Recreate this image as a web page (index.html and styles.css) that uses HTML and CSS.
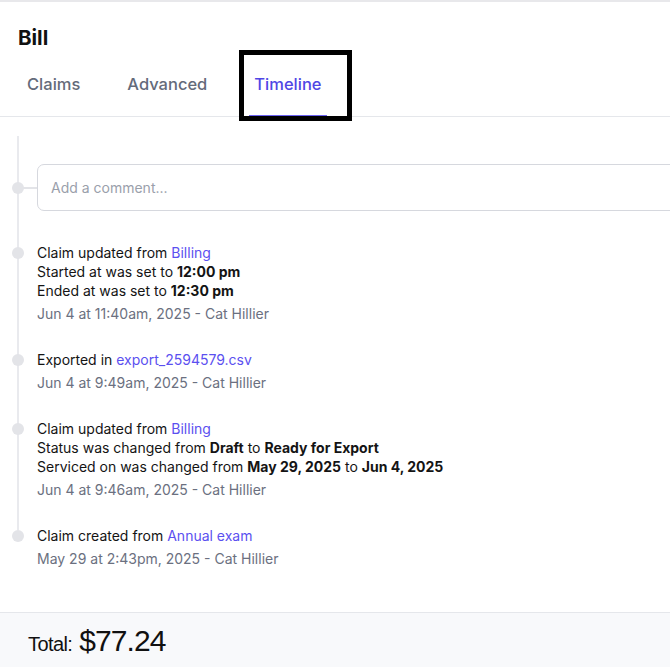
FILE: index.html
```html
<!DOCTYPE html>
<html lang="en">
<head>
  <meta charset="UTF-8">
  <title>Bill</title>
  <link rel="stylesheet" href="styles.css">
</head>
<body>

  <div class="page">
    <h1 class="title">Bill</h1>

    <nav class="tabs">
      <a class="tab">Claims</a>
      <a class="tab">Advanced</a>
      <a class="tab active">Timeline</a>
    </nav>
    <!-- highlight box drawn over the active tab -->
    <div class="highlight"></div>

    <div class="timeline">
      <div class="event comment-row">
        <span class="dot"></span>
        <span class="connector"></span>
        <input class="comment" type="text" placeholder="Add a comment...">
      </div>

      <div class="event">
        <span class="dot"></span>
        <div class="body">
          <p>Claim updated from <a href="#">Billing</a></p>
          <p>Started at was set to <b>12:00 pm</b></p>
          <p>Ended at was set to <b>12:30 pm</b></p>
          <p class="meta">Jun 4 at 11:40am, 2025 - Cat Hillier</p>
        </div>
      </div>

      <div class="event">
        <span class="dot"></span>
        <div class="body">
          <p>Exported in <a href="#">export_2594579.csv</a></p>
          <p class="meta">Jun 4 at 9:49am, 2025 - Cat Hillier</p>
        </div>
      </div>

      <div class="event">
        <span class="dot"></span>
        <div class="body">
          <p>Claim updated from <a href="#">Billing</a></p>
          <p>Status was changed from <b>Draft</b> to <b>Ready for Export</b></p>
          <p>Serviced on was changed from <b>May 29, 2025</b> to <b>Jun 4, 2025</b></p>
          <p class="meta">Jun 4 at 9:46am, 2025 - Cat Hillier</p>
        </div>
      </div>

      <div class="event last">
        <span class="dot"></span>
        <div class="body">
          <p>Claim created from <a href="#">Annual exam</a></p>
          <p class="meta">May 29 at 2:43pm, 2025 - Cat Hillier</p>
        </div>
      </div>
    </div>

    <footer class="total">
      <span class="total-label">Total:</span>
      <span class="total-amount">$77.24</span>
    </footer>
  </div>

</body>
</html>
```

FILE: styles.css
```css
body {
  margin: 0;
  font-family: 'Inter', 'Noto Sans', sans-serif;
  color: #111;
  background: #fff;
  overflow: hidden;
}

.page {
  position: relative;
  border-top: 2px solid #e8e8eb;
}

.title {
  margin: 0;
  padding: 24px 0 0 18px;
  font-size: 20.5px;
  line-height: 24px;
  font-weight: 700;
}

.tabs {
  display: flex;
  gap: 37px;
  margin-top: 24px;
  padding-left: 22px;
  border-bottom: 1px solid #e5e7eb;
}

.tab {
  padding: 0 5px 21px;
  font-size: 16.5px;
  line-height: 20px;
  font-weight: 500;
  color: #646b7a;
  border-bottom: 2px solid transparent;
  margin-bottom: -1px;
}

.tab.active {
  color: #5046e5;
  border-bottom-color: #6a61f0;
}

.highlight {
  position: absolute;
  left: 239px;
  top: 48px;
  width: 103px;
  height: 61px;
  border: 5px solid #000;
}

/* timeline */
.timeline {
  position: relative;
  padding: 19px 0 44px;
}

.timeline::before {
  content: "";
  position: absolute;
  left: 17px;
  top: 19px;
  height: 394px;
  width: 2px;
  background: #e9eaee;
}

.event {
  position: relative;
  display: flex;
  padding-left: 37px;
  margin-bottom: 27px;
}

.event.last {
  margin-bottom: 0;
}

.dot {
  position: absolute;
  left: 12px;
  top: 4px;
  width: 12px;
  height: 12px;
  border-radius: 50%;
  background: #e3e4e8;
}

.comment-row {
  margin-top: 28px;
  margin-bottom: 32px;
}

.comment-row .dot {
  top: 18px;
}

.connector {
  position: absolute;
  left: 22px;
  top: 23px;
  width: 15px;
  height: 2px;
  background: #e3e4e8;
}

.comment {
  width: 720px;
  flex-shrink: 0;
  height: 47px;
  box-sizing: border-box;
  border: 1px solid #d6d8de;
  border-radius: 7px;
  padding: 0 13px;
  font-family: inherit;
  font-size: 14px;
  color: #111;
  outline: none;
}

.comment::placeholder {
  color: #9aa0ab;
}

.body p {
  margin: 0;
  font-size: 14px;
  line-height: 19px;
  color: #141414;
}

.body b {
  font-weight: 700;
}

.body a {
  color: #5b50f0;
  text-decoration: none;
}

.body .meta {
  margin-top: 4px;
  color: #6b7080;
}

/* footer */
.total {
  display: flex;
  align-items: baseline;
  gap: 7px;
  padding: 11px 28px 20px;
  background: #f8f9fb;
  border-top: 1px solid #e5e7eb;
  font-family: 'Liberation Sans', Arial, sans-serif;
}

.total-label {
  font-size: 20px;
  letter-spacing: -0.6px;
}

.total-amount {
  font-size: 30px;
  letter-spacing: -0.9px;
}
```
